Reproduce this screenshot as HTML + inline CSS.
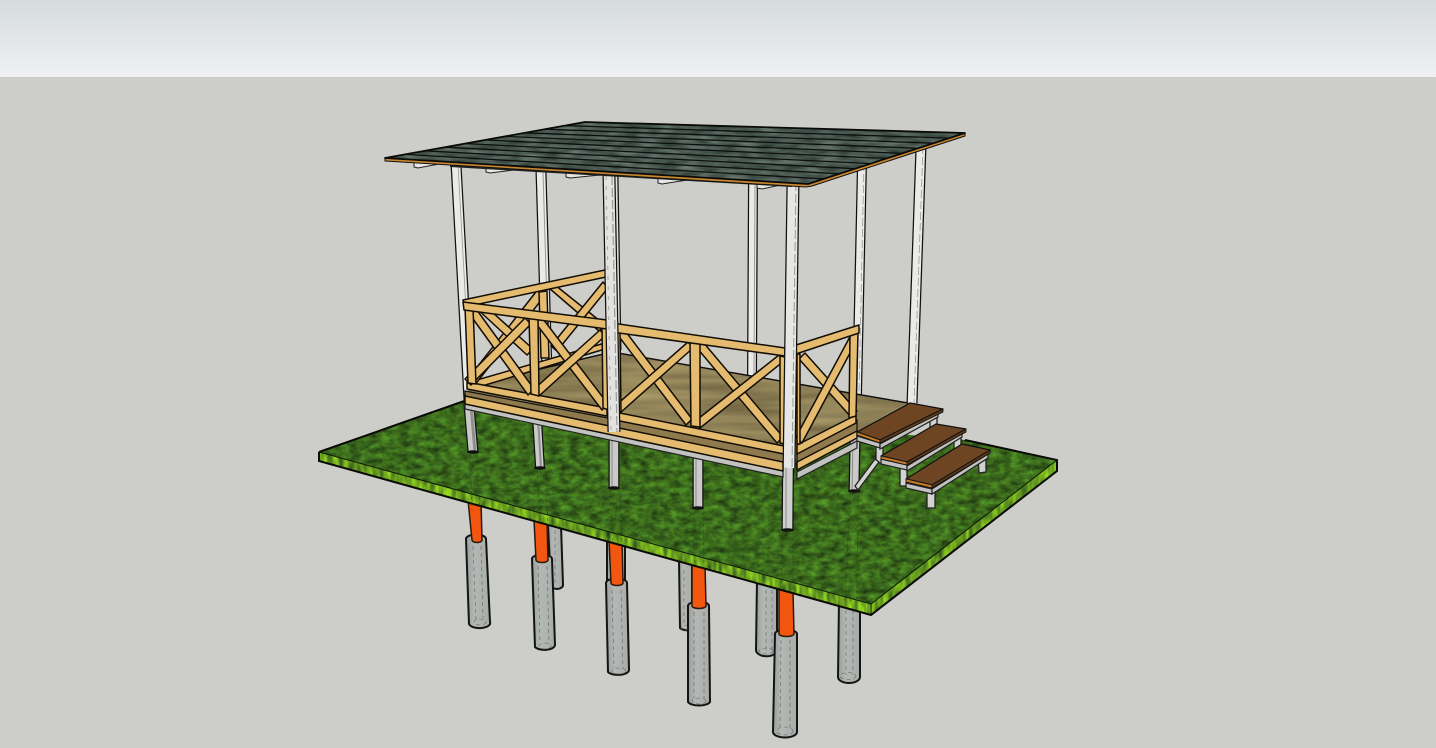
<!DOCTYPE html>
<html><head><meta charset="utf-8"><style>
html,body{margin:0;padding:0;width:1436px;height:748px;overflow:hidden;background:#cdcec9}
svg{display:block}
.w line{stroke-linecap:butt}
.wood{fill:#e4bb6f;stroke:#120d05;stroke-width:1.500;stroke-linejoin:round}
.dk{fill:#8f7a4e;stroke:#111;stroke-width:1.200}
.gb{fill:#c2c2c0;stroke:#222;stroke-width:1.200}
.tr{fill:#6e4522;stroke:#111;stroke-width:1.300;stroke-linejoin:round}
.ed{fill:#c47a2a;stroke:#111;stroke-width:.8}
.leg{fill:#d2d2d0;stroke:#222;stroke-width:1.300}
.pile{fill:url(#pg);stroke:#141414;stroke-width:2}
.or{fill:#f2560f;stroke:#2a1a10;stroke-width:1.500}
.dash{fill:none;stroke:#666;stroke-width:.6;stroke-dasharray:4 3}
.xr{fill:none;stroke:#1c3a10;stroke-width:.7;stroke-dasharray:3 3;opacity:.6}
</style></head><body>
<svg width="1436" height="748" viewBox="0 0 1436 748" xmlns="http://www.w3.org/2000/svg">
<defs>
<linearGradient id="sky" x1="0" y1="0" x2="0" y2="1"><stop offset="0" stop-color="#d6dbde"/><stop offset="1" stop-color="#eff1f2"/></linearGradient>
<linearGradient id="pg" x1="0" y1="0" x2="1" y2="0"><stop offset="0" stop-color="#9a9e9c"/><stop offset=".35" stop-color="#b4b8b5"/><stop offset="1" stop-color="#a8aca9"/></linearGradient>
<filter id="grass" x="0" y="0" width="100%" height="100%" color-interpolation-filters="sRGB"><feTurbulence type="fractalNoise" baseFrequency=".1 .17" numOctaves="3" seed="4"/><feColorMatrix type="matrix" values=".3 0 0 0 .08  .55 0 0 0 .14  .12 0 0 0 .05  0 0 0 0 1"/><feComposite in2="SourceGraphic" operator="in"/></filter>
<filter id="grass2" x="0" y="0" width="100%" height="100%" color-interpolation-filters="sRGB"><feTurbulence type="fractalNoise" baseFrequency=".18 .05" numOctaves="2" seed="9"/><feColorMatrix type="matrix" values=".7 0 0 0 .06  .9 0 0 0 .17  0 0 0 0 .12  0 0 0 0 1"/><feComposite in2="SourceGraphic" operator="in"/></filter>
<filter id="rf" x="0" y="0" width="100%" height="100%" color-interpolation-filters="sRGB"><feTurbulence type="fractalNoise" baseFrequency=".05 .2" numOctaves="2" seed="3"/><feColorMatrix type="matrix" values=".35 0 0 0 .12  .35 0 0 0 .18  .35 0 0 0 .15  0 0 0 0 1"/><feComposite in2="SourceGraphic" operator="in"/></filter>
<filter id="fl" x="0" y="0" width="100%" height="100%" color-interpolation-filters="sRGB"><feTurbulence type="fractalNoise" baseFrequency=".01 .12" numOctaves="2" seed="2"/><feColorMatrix type="matrix" values=".3 0 0 0 .41  .27 0 0 0 .37  .2 0 0 0 .24  0 0 0 0 1"/><feComposite in2="SourceGraphic" operator="in"/></filter>
</defs>
<rect width="1436" height="748" fill="#cdcec9"/>
<rect width="1436" height="77" fill="url(#sky)"/>

<!-- back piles -->
<g>
<path class="pile" d="M548 525L551 585A6 4 0 0 0 563 585L561 525Z"/>
<path class="pile" d="M607 540L607 585L625 585L625 540Z"/>
<path class="pile" d="M679 560L680 628A9 4 0 0 0 692 630L692 560Z"/>
<path class="pile" d="M757 580L756 650A10 6 0 0 0 777 650L777 580Z"/>
<path class="pile" d="M839 600L838 677A11 6 0 0 0 860 677L860 600Z"/>
<path class="dash" d="M766 590V650M772 590V650M846 610V675M853 610V675M555 530V585M684 570V625"/>
<ellipse cx="848" cy="676" rx="8" ry="3.500" class="dash"/><ellipse cx="766" cy="651" rx="7" ry="3" class="dash"/><ellipse cx="688" cy="628" rx="7" ry="3" class="dash"/>
</g>
<!-- front piles -->
<g>
<path class="pile" d="M466 539L469 624A10.500 5 0 0 0 490 622L486 539A10 4.500 0 0 0 466 539Z"/>
<path class="or" d="M468 500L472 540A5 2.500 0 0 0 482 540L481 500Z"/>
<path class="pile" d="M532 559L535 647A10.500 5 0 0 0 555 645L552 559A10 4.500 0 0 0 532 559Z"/>
<path class="or" d="M534 520L536 560A6 2.500 0 0 0 548 560L547 520Z"/>
<path class="pile" d="M606 583L608 672A11 5 0 0 0 629 670L627 583A10.500 4.500 0 0 0 606 583Z"/>
<path class="or" d="M609 540L611 583A6 2.500 0 0 0 623 583L622 540Z"/>
<path class="pile" d="M688 606L688 702A11.500 5 0 0 0 710 702L709 606A10.500 4.500 0 0 0 688 606Z"/>
<path class="or" d="M692 565L692 606A7 2.500 0 0 0 706 606L705 565Z"/>
<path class="pile" d="M775 634L773 732A12 5.500 0 0 0 797 732L797 634A11 4.500 0 0 0 775 634Z"/>
<path class="or" d="M779 590L779 634A7.500 2.500 0 0 0 794 634L793 590Z"/>
<path class="dash" d="M473 546L476 620M481 546L483 618M538 566L540 642M547 566L549 642M612 590L614 668M621 590L623 668M694 612V698M704 612V698M781 640L780 728M790 640V728"/>
<ellipse cx="480" cy="622" rx="6" ry="3" class="dash"/><ellipse cx="545" cy="646" rx="6" ry="3" class="dash"/><ellipse cx="619" cy="671" rx="7" ry="3" class="dash"/><ellipse cx="699" cy="701" rx="7" ry="3" class="dash"/><ellipse cx="785" cy="731" rx="8" ry="4" class="dash"/>
</g>

<!-- ground -->
<polygon points="319,452 319,461 870,615 1057,471 1057,460 870,604" filter="url(#grass2)" fill="#000"/>
<polygon points="319,452 480,395 965,440 1057,460 871,604" filter="url(#grass)" fill="#000"/>
<path d="M319 452L871 604L1057 460M871 604L871 615" fill="none" stroke="#0d1a06" stroke-width="1"/>
<path d="M319 452L319 461L871 615L1057 471L1057 460L965 440M319 452L470 399" fill="none" stroke="#0a0a06" stroke-width="2"/>
<path class="xr" d="M470 455L472 510M476 455L480 510M537 470L541 525M545 470L548 525M610 490L613 545M620 490L622 545M694 512L695 565M703 512L704 565M783 532L781 590M793 532L793 590M850 495L845 600M858 495L857 600"/>

<!-- lower posts -->
<g class="w">
<line x1="469" y1="405" x2="473" y2="452" stroke="#111" stroke-width="11"/><line x1="469" y1="405" x2="473" y2="452" stroke="#c8c8c6" stroke-width="8.500"/><line x1="471" y1="405" x2="475" y2="452" stroke="#8e8e8c" stroke-width="3"/>
<line x1="537" y1="418" x2="540" y2="468" stroke="#111" stroke-width="10"/><line x1="537" y1="418" x2="540" y2="468" stroke="#cacac8" stroke-width="7.500"/><line x1="538" y1="418" x2="541" y2="468" stroke="#8e8e8c" stroke-width="2"/>
<line x1="698" y1="450" x2="698" y2="508" stroke="#111" stroke-width="11"/><line x1="698" y1="450" x2="698" y2="508" stroke="#cacac8" stroke-width="8.500"/><line x1="696" y1="450" x2="696" y2="508" stroke="#888" stroke-width="1"/>
<line x1="614" y1="430" x2="614" y2="488" stroke="#111" stroke-width="11"/><line x1="614" y1="430" x2="614" y2="488" stroke="#cacac8" stroke-width="8.500"/><line x1="612" y1="430" x2="612" y2="488" stroke="#888" stroke-width="1"/>
<line x1="788" y1="465" x2="787.500" y2="530" stroke="#111" stroke-width="12"/><line x1="788" y1="465" x2="787.500" y2="530" stroke="#cfcfcd" stroke-width="9.500"/><line x1="786" y1="465" x2="786" y2="530" stroke="#888" stroke-width="1"/>
<line x1="855" y1="440" x2="854" y2="491" stroke="#111" stroke-width="11"/><line x1="855" y1="440" x2="854" y2="491" stroke="#cacac8" stroke-width="8.500"/><line x1="853" y1="440" x2="852" y2="491" stroke="#888" stroke-width="1"/>
</g>
<ellipse cx="473" cy="452" rx="6" ry="1.800" fill="#111"/><ellipse cx="540" cy="468" rx="6" ry="1.800" fill="#111"/><ellipse cx="698" cy="508" rx="6" ry="1.800" fill="#111"/><ellipse cx="614" cy="488" rx="6" ry="1.800" fill="#111"/><ellipse cx="787.500" cy="530" rx="6.500" ry="1.800" fill="#111"/><ellipse cx="854" cy="491" rx="6" ry="1.800" fill="#111"/>

<!-- back upper posts -->
<g class="w">
<line x1="541" y1="172" x2="547" y2="372" stroke="#111" stroke-width="11"/><line x1="541" y1="172" x2="547" y2="372" stroke="#eaeae8" stroke-width="8.500"/><line x1="543" y1="172" x2="549" y2="372" stroke="#999" stroke-width="1"/>
<line x1="753" y1="180" x2="752" y2="376" stroke="#111" stroke-width="10"/><line x1="753" y1="180" x2="752" y2="376" stroke="#eaeae8" stroke-width="7.500"/><line x1="755" y1="180" x2="754" y2="376" stroke="#999" stroke-width="1"/>
<line x1="921" y1="146" x2="912" y2="403" stroke="#111" stroke-width="11"/><line x1="921" y1="146" x2="912" y2="403" stroke="#eaeae8" stroke-width="8.500"/><line x1="923" y1="146" x2="914" y2="403" stroke="#999" stroke-width=".8" stroke-dasharray="8 3"/>
<line x1="862" y1="163" x2="856" y2="440" stroke="#111" stroke-width="10"/><line x1="862" y1="163" x2="856" y2="440" stroke="#eaeae8" stroke-width="7.500"/><line x1="864" y1="163" x2="858" y2="440" stroke="#999" stroke-width=".8" stroke-dasharray="8 3"/>
<line x1="615" y1="176" x2="618" y2="350" stroke="#111" stroke-width="7"/><line x1="615" y1="176" x2="618" y2="350" stroke="#e0e0de" stroke-width="4.500"/>
<line x1="456" y1="164" x2="469" y2="400" stroke="#111" stroke-width="11"/><line x1="456" y1="164" x2="469" y2="400" stroke="#eaeae8" stroke-width="8.500"/><line x1="458" y1="164" x2="471" y2="400" stroke="#999" stroke-width=".8"/>
</g>

<!-- floor -->
<polygon points="468,386 612,352 908,403 856,432 790,462 468,392" filter="url(#fl)" fill="#000"/>
<path d="M468 386L612 352L908 403" fill="none" stroke="#111" stroke-width="1.500"/>

<!-- back-left rail -->
<g>
<polygon class="wood" points="470,382 605,343 605,349 472,389"/>
<polygon class="wood" points="467,380 474,386 546,294 539,288"/>
<polygon class="wood" points="474,306 481,302 533,349 527,355"/>
<polygon class="wood" points="549,288 555,285 605,325 599,331"/>
<polygon class="wood" points="557,351 551,346 603,282 608,288"/>
<polygon class="wood" points="539,292 547,291 549,358 541,358"/>
<polygon class="wood" points="463,300 605,270 606,277 465,307"/>
</g>

<!-- beams -->
<g>
<polygon class="dk" points="465,391 608,418 784,452 784,467 465,400"/>
<polygon class="dk" points="797,452 857,420 857,432 797,464"/>
<polygon class="gb" points="465,402 783,470 783,477 465,409"/>
<polygon class="gb" points="797,472 857,441 857,448 797,479"/>
<polygon class="wood" points="465,396 783,462 783,471 465,404"/>
<polygon class="wood" points="797,462 857,431 857,438 797,470"/>
<polygon class="wood" points="467,382 607,408 607,416 467,389"/>
<polygon class="wood" points="615,412 784,446 784,454 615,420"/>
<polygon class="wood" points="797,445 856,415 856,423 797,454"/>
</g>

<!-- front diagonals -->
<g>
<polygon class="wood" points="468,312 474,306 534,389 528,395"/>
<polygon class="wood" points="471,385 465,379 525,318 531,324"/>
<polygon class="wood" points="534,321 540,315 608,404 602,410"/>
<polygon class="wood" points="539,396 533,390 600,330 605,336"/>
<polygon class="wood" points="617,334 623,328 692,419 686,425"/>
<polygon class="wood" points="620,413 614,407 688,342 693,348"/>
<polygon class="wood" points="697,348 703,342 783,437 777,443"/>
<polygon class="wood" points="700,428 694,422 779,355 784,361"/>
<polygon class="wood" points="799,359 805,353 857,411 851,417"/>
<polygon class="wood" points="802,443 796,437 852,333 858,338"/>
<!-- uprights -->
<polygon class="wood" points="465,307 473,308 476,384 468,383"/>
<polygon class="wood" points="529,317 538,318 539,396 531,394"/>
<polygon class="wood" points="602,327 608,328 609,410 603,408"/>
<polygon class="wood" points="614,331 620,332 621,412 615,411"/>
<polygon class="wood" points="690,342 700,343 700,427 691,426"/>
<polygon class="wood" points="780,356 785,357 785,444 780,443"/>
<polygon class="wood" points="797,354 800,354 800,444 797,444"/>
<polygon class="wood" points="850,335 858,332 856,416 849,418"/>
<!-- top rails -->
<polygon class="wood" points="463,302 607,320 607,329 464,310"/>
<polygon class="wood" points="612,323 785,348 785,356 612,332"/>
<polygon class="wood" points="796,345 859,325 859,333 796,354"/>
</g>

<!-- front posts -->
<g class="w">
<line x1="609" y1="176" x2="614" y2="432" stroke="#111" stroke-width="13"/><line x1="609" y1="176" x2="614" y2="432" stroke="#e2e2e0" stroke-width="10.500"/><line x1="612" y1="176" x2="617" y2="432" stroke="#999" stroke-width="1.200" stroke-dasharray="9 3"/><line x1="606" y1="176" x2="611" y2="432" stroke="#aaa" stroke-width="1" stroke-dasharray="4 6"/>
<line x1="793" y1="182" x2="789" y2="468" stroke="#111" stroke-width="13"/><line x1="793" y1="182" x2="789" y2="468" stroke="#e6e6e4" stroke-width="10.500"/><line x1="796" y1="182" x2="792" y2="468" stroke="#999" stroke-width="1" stroke-dasharray="9 3"/>
</g>

<!-- stairs -->
<g>
<polygon class="leg" points="927,492 935,491 935,508 927,508"/>
<polygon class="leg" points="978,457 986,455 986,472 979,473"/>
<polygon class="leg" points="900,468 907,466 907,486 900,486"/>
<polygon class="leg" points="954,438 961,434 961,448 954,450"/>
<polygon class="leg" points="876,445 883,442 883,463 876,463"/>
<polygon class="leg" points="930,418 937,414 937,427 930,430"/>
<polygon class="leg" points="858,490 855,486 875,459 879,462"/>
<polygon class="gb" points="857,436 880,443 880,448 857,441"/>
<polygon class="gb" points="880,444 938,413 938,417 880,449"/>
<polygon class="gb" points="881,459 907,465 907,470 881,464"/>
<polygon class="gb" points="907,466 962,433 962,437 907,471"/>
<polygon class="gb" points="906,483 932,489 932,494 906,488"/>
<polygon class="gb" points="932,489 988,454 988,458 932,494"/>
<polygon class="tr" points="857,432 910,403 943,409 880,440"/>
<polygon class="ed" points="857,432 880,440 880,443 857,435"/>
<polygon class="ed" points="880,440 943,409 943,412 880,443" style="fill:#5c3a1c"/>
<polygon class="tr" points="881,456 936,424 966,429 907,462"/>
<polygon class="ed" points="881,456 907,462 907,465 881,459"/>
<polygon class="ed" points="907,462 966,429 966,432 907,465" style="fill:#5c3a1c"/>
<polygon class="tr" points="906,479 962,444 990,450 932,485"/>
<polygon class="ed" points="906,479 932,485 932,488 906,482"/>
<polygon class="ed" points="932,485 990,450 990,453 932,488" style="fill:#5c3a1c"/>
</g>

<!-- purlins -->
<g>
<polygon fill="#e6e6e4" stroke="#222" points="414,159 460,160 418,168 414,167"/>
<polygon fill="#e6e6e4" stroke="#222" points="486,165 530,168 490,173 486,172"/>
<polygon fill="#e6e6e4" stroke="#222" points="566,170 610,174 570,178 566,177"/>
<polygon fill="#e6e6e4" stroke="#222" points="658,175 700,178 662,184 658,183"/>
<polygon fill="#e6e6e4" stroke="#222" points="757,180 790,183 762,189 757,188"/>
<path d="M450 166L792 186" stroke="#222" stroke-width="2"/>
<polygon fill="#9a7a40" stroke="#222" points="850,170 866,162 866,165 852,172"/>
<polygon fill="#9a7a40" stroke="#222" points="876,158 890,152 890,155 878,161"/>
<polygon fill="#9a7a40" stroke="#222" points="896,152 908,147 908,150 898,155"/>
<polygon fill="#9a7a40" stroke="#222" points="914,147 925,143 925,146 916,150"/>
<polygon fill="#9a7a40" stroke="#222" points="930,142 942,138 942,141 932,145"/>
</g>

<!-- roof -->
<polygon points="385,158 385,161 806,187 812,186 965,136 965,133 808,184" fill="#c9882f" stroke="#111" stroke-width="1" stroke-linejoin="round"/>
<polygon points="385,158 585,122 965,133 808,184" filter="url(#rf)" fill="#000"/>
<g stroke="#0c0f0d" stroke-width="1.300" fill="none">
<path d="M405 154.400L823.700 178.900"/><path d="M425 150.800L839.400 173.800"/><path d="M445 147.200L855.100 168.700"/><path d="M465 143.600L870.800 163.600"/><path d="M485 140L886.500 158.500"/><path d="M505 136.400L902.200 153.400"/><path d="M525 132.800L917.900 148.300"/><path d="M545 129.200L933.600 143.200"/><path d="M565 125.600L949.300 138.100"/>
</g>
<path d="M385 158L585 122L965 133L808 184Z" fill="none" stroke="#0a0a0a" stroke-width="1.800" stroke-linejoin="round"/>
</svg>
</body></html>
